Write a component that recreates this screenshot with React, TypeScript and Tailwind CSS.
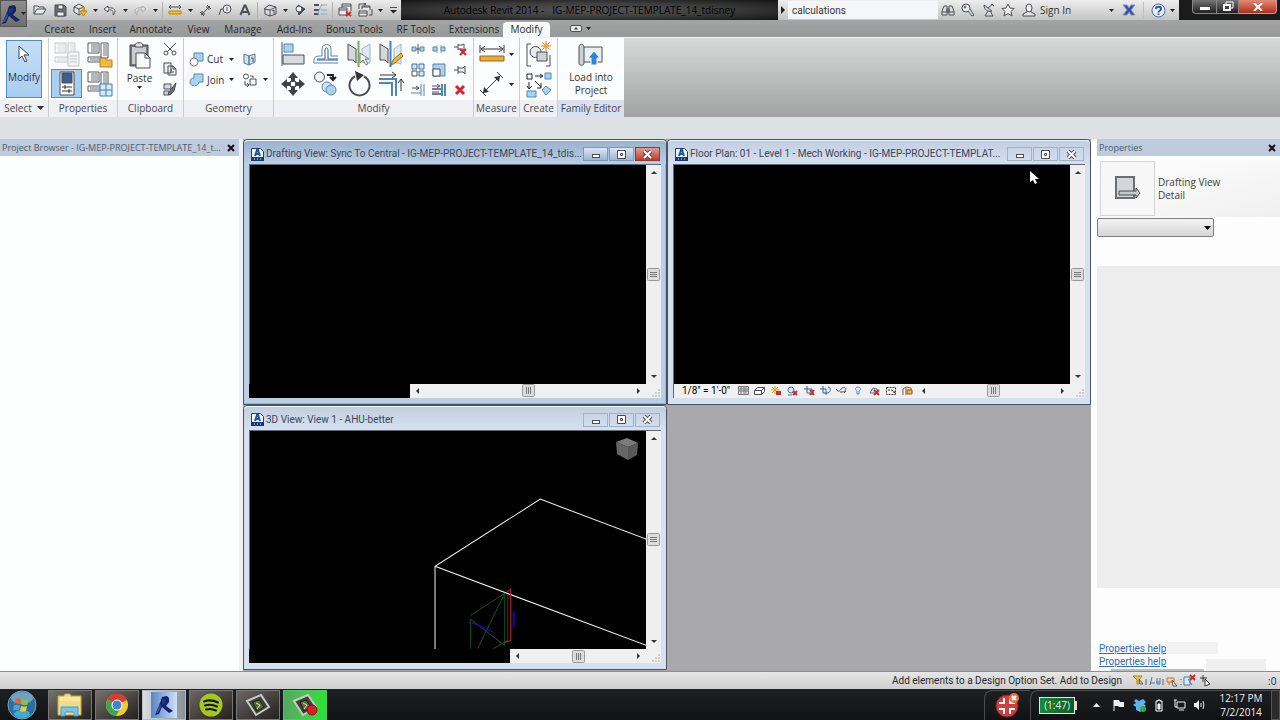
import type { ReactNode } from "react";
import clsx from "clsx";

interface IconProps {
  w: number;
  h: number;
  children: ReactNode;
  className?: string;
}

function Icon({ w, h, children, className }: IconProps) {
  return (
    <svg
      width={w}
      height={h}
      viewBox={`0 0 ${w} ${h}`}
      fill="none"
      stroke="#4b4f54"
      aria-hidden="true"
      className={clsx("shrink-0", className)}
    >
      {children}
    </svg>
  );
}

function Caret({ className }: { className?: string }) {
  return (
    <Icon w={5} h={3} className={className}>
      <path d="M0 0h5L2.500 3z" fill="#222" stroke="none" />
    </Icon>
  );
}

const BLUE = "#4f87bd";
const PALE = "#a9d2ee";
const RED = "#cf2a2a";

/* ---------- Quick access toolbar icons ---------- */

const icons = {
  open: (
    <Icon w={14} h={12}>
      <path d="M1 10V2h4l1 1h5v2M1 10l3-5h9l-3 5z" fill="#ececec" />
    </Icon>
  ),
  save: (
    <Icon w={13} h={13}>
      <path d="M1 1h9l2 2v9H1z" fill="#6d7075" />
      <path d="M4 1h5v4H4zM3 8h7v4H3z" fill="#f2f2f2" />
    </Icon>
  ),
  sync: (
    <Icon w={15} h={14}>
      <path d="M1 4l5-3 5 3v5l-5 3-5-3zM1 4l5 2 5-2M6 6v6" fill="#e8e8e8" />
      <path d="M8 8h5M10.500 4v5" stroke="#d99a18" strokeWidth={2} />
      <path d="M7 8h7l-3.500 5z" fill="#f0bb3c" stroke="#b98711" />
    </Icon>
  ),
  undo: (
    <Icon w={14} h={11}>
      <path d="M5 1L1 4l4 3V5c4-1 6 1 5 5 4-4 2-8-5-7z" fill="#f5f5f5" />
    </Icon>
  ),
  redo: (
    <Icon w={14} h={11}>
      <path d="M9 1l4 3-4 3V5C5 4 3 6 4 10 0 6 2 2 9 3z" fill="#e4e4e4" stroke="#a6a8aa" />
    </Icon>
  ),
  measure: (
    <Icon w={14} h={12}>
      <path d="M1 3h12M3 1L1 3l2 2M11 1l2 2-2 2" />
      <path d="M1 7h12v3H1z" fill="#f2c12e" stroke="#b98711" />
    </Icon>
  ),
  dimension: (
    <Icon w={13} h={13}>
      <path d="M2 11l9-9M1 8l4 4M8 1l4 4M3 7v3h3M7 3h3v3" />
    </Icon>
  ),
  tag: (
    <Icon w={14} h={12}>
      <circle cx={9} cy={5} r={4} fill="#eee" />
      <path d="M9 3v4M5 5H3L1 11" />
    </Icon>
  ),
  text: (
    <Icon w={12} h={12}>
      <path d="M1.500 11L5.500 1.500h1L10.500 11M3 8h6" strokeWidth={2} />
    </Icon>
  ),
  house: (
    <Icon w={14} h={13}>
      <path d="M1 5l5-4 7 2v7l-6 2-5-2V5M7 12V6l6-3M1 5l6 1" fill="#dadada" />
      <path d="M9 7l2-1v4" />
    </Icon>
  ),
  section: (
    <Icon w={12} h={12}>
      <path d="M4 1l7 4-5 5z" fill="#3f4347" />
      <circle cx={5} cy={5} r={3} fill="#f4f4f4" />
      <path d="M5 8v3" strokeWidth={2} />
    </Icon>
  ),
  thin: (
    <Icon w={15} h={12}>
      <path d="M1 1h5M1 6h5M1 10h5" strokeWidth={2} />
      <path d="M8 1h6M8 6h6M8 10h6M9 0L6 6l-1 6" stroke="#7fa6c9" />
    </Icon>
  ),
  closeHidden: (
    <Icon w={14} h={14}>
      <path d="M4 5V1h9v7M4 3h9M1 5h8v7H1zM1 7h8" fill="#ededed" />
      <path d="M8 9l5 4M13 9l-5 4" stroke="#d5252b" strokeWidth={2} />
    </Icon>
  ),
  switchWin: (
    <Icon w={15} h={14}>
      <path d="M4 6V3h8v4M4 4h8M1 8h8v5H1zM1 10h8" fill="#ededed" />
      <path d="M1 6V1h7M6 0l2 1-2 1M14 6v6h-3" />
    </Icon>
  ),
  binoculars: (
    <Icon w={14} h={13}>
      <path d="M3 2h3v9H1V7zM11 2H8v9h5V7zM6 5h2v3H6zM1 8h5M8 8h5" fill="#ddd" />
    </Icon>
  ),
  key: (
    <Icon w={14} h={14}>
      <circle cx={5} cy={5} r={4} fill="#eee" />
      <path d="M7 8l4 5 2-1-4-6" fill="#ddd" />
      <circle cx={4} cy={4} r={1} />
    </Icon>
  ),
  dish: (
    <Icon w={13} h={14}>
      <path d="M2 2c0 5 4 7 8 6zM6 5l5-4M6 8l-3 5h8l-3-5M9 1l3 2" fill="#ddd" />
    </Icon>
  ),
  star: (
    <Icon w={14} h={14}>
      <path d="M7 1l2 4 4 .5-3 3 1 4.500-4-2.500L3 13l1-4.500-3-3L5 5z" fill="#f1f1f1" />
    </Icon>
  ),
  user: (
    <Icon w={14} h={14}>
      <path d="M5 8v1L1 11v2h12v-2L9 9V8" fill="#e5e5e5" />
      <ellipse cx={7} cy={5} rx={3} ry={4} fill="#eee" />
    </Icon>
  ),
  exchange: (
    <Icon w={14} h={12}>
      <path d="M1 1h4l2 3 2-3h4L9 6l4 5H9L7 8l-2 3H1l4-5z" fill="#3553a5" stroke="#7d92cc" />
    </Icon>
  ),
  help: (
    <Icon w={15} h={15}>
      <circle cx={7.500} cy={7.500} r={6.500} fill="#e7effa" stroke="#4b6b9b" />
      <path d="M5 6c0-3 5-3 5 0 0 2-2.500 1.500-2.500 3.500M7.500 10.500v1.500" stroke="#2c57a5" strokeWidth={2} />
    </Icon>
  ),
};

type IconName = keyof typeof icons;

interface ToolItem {
  icon?: IconName;
  label?: string;
  caret?: boolean;
}

const quickTools: ToolItem[] = [
  { icon: "open", label: "Open" },
  { icon: "save", label: "Save" },
  { icon: "sync", label: "Synchronize" },
  { caret: true },
  { icon: "undo", label: "Undo" },
  { caret: true },
  { icon: "redo", label: "Redo" },
  { caret: true },
  {},
  { icon: "measure", label: "Measure" },
  { caret: true },
  { icon: "dimension", label: "Aligned Dimension" },
  { icon: "tag", label: "Tag by Category" },
  { icon: "text", label: "Text" },
  {},
  { icon: "house", label: "Default 3D View" },
  { caret: true },
  { icon: "section", label: "Section" },
  { icon: "thin", label: "Thin Lines" },
  {},
  { icon: "closeHidden", label: "Close Hidden Windows" },
  { icon: "switchWin", label: "Switch Windows" },
  { caret: true },
];

const tabs = [
  { name: "Create", cell: "w-[43px]" },
  { name: "Insert", cell: "w-[43px]" },
  { name: "Annotate", cell: "w-[54px]" },
  { name: "View", cell: "w-[41px]" },
  { name: "Manage", cell: "w-[48px]" },
  { name: "Add-Ins", cell: "w-[55px]" },
  { name: "Bonus Tools", cell: "w-[65px]" },
  { name: "RF Tools", cell: "w-[58px]" },
  { name: "Extensions", cell: "w-[58px]" },
  { name: "Modify", cell: "w-[47px]" },
];

function TitleBar() {
  return (
    <div className="flex h-5 bg-[#1b1b1b]">
      <div className="flex shrink-0 items-center bg-linear-to-b from-[#ededed] to-[#bfbfbf] pl-[3px]">
        {quickTools.map((tool, i) => {
          if (tool.icon) {
            return (
              <button key={i} aria-label={tool.label} className="flex w-5 justify-center">
                {icons[tool.icon]}
              </button>
            );
          }
          return tool.caret ? (
            <span key={i} className="flex w-[10px] justify-center">
              <Caret />
            </span>
          ) : (
            <span key={i} className="mx-[2px] h-4 w-px bg-[#b0b0b0]" />
          );
        })}
        <button aria-label="Customize toolbar" className="flex w-4 justify-center">
          <Icon w={7} h={7}>
            <path d="M0 .5h7" />
            <path d="M0 3h7L3.500 6.500z" fill="#222" stroke="none" />
          </Icon>
        </button>
      </div>
      <div className="flex min-w-0 flex-1 items-center justify-center gap-2 bg-radial from-[#555] via-[#3d3d3d] to-[#151515] whitespace-pre text-black">
        <span>Autodesk Revit 2014 -</span>
        <span>IG-MEP-PROJECT-TEMPLATE_14_tdisney</span>
      </div>
      <div className="flex w-[401px] shrink-0 items-center bg-linear-to-b from-[#eeeeee] to-[#c4c4c4]">
        <Icon w={10} h={8}>
          <path d="M3 0l4 4-4 4z" fill="#222" stroke="none" />
        </Icon>
        <input
          aria-label="Search help"
          defaultValue="calculations"
          className="h-[18px] w-[150px] bg-[#f5f6f9] px-1 font-['Roboto','Noto_Sans',sans-serif] text-[#333] outline-none"
        />
        <button aria-label="Search" className="flex w-5 justify-center">{icons.binoculars}</button>
        <button aria-label="Subscription Center" className="flex w-5 justify-center">{icons.key}</button>
        <button aria-label="Communication Center" className="flex w-5 justify-center">{icons.dish}</button>
        <button aria-label="Favorites" className="flex w-5 justify-center">{icons.star}</button>
        <button className="flex items-center gap-1 pl-[4px] text-[#333]">
          {icons.user}
          Sign In
        </button>
        <Caret className="ml-auto" />
        <button aria-label="Exchange Apps" className="ml-2 flex">{icons.exchange}</button>
        <span className="mx-[7px] h-4 w-px bg-[#c0c0c0]" />
        <button aria-label="Help" className="flex">{icons.help}</button>
        <Caret className="mx-1" />
      </div>
      <div className="flex w-[101px] shrink-0 pr-[3px] pl-[13px]">
        <button aria-label="Minimize" className="flex h-[14px] w-[25px] items-end justify-center rounded-bl border border-t-0 border-[#888] bg-linear-to-b from-[#777] to-[#222] pb-[3px]">
          <span className="h-[3px] w-[10px] bg-white" />
        </button>
        <button aria-label="Restore" className="flex h-[14px] w-[22px] items-center justify-center border border-t-0 border-l-0 border-[#888] bg-linear-to-b from-[#777] to-[#222]">
          <Icon w={12} h={11}>
            <path d="M4 3V1h7v6H9" stroke="#fff" />
            <path d="M2 4h6v5H2z" stroke="#fff" strokeWidth={2} />
          </Icon>
        </button>
        <button aria-label="Close" className="flex h-[14px] flex-1 items-center justify-center rounded-br border border-t-0 border-l-0 border-[#c99] bg-linear-to-b from-[#e08a78] to-[#b22a12]">
          <Icon w={10} h={8}>
            <path d="M1 0l8 8M9 0L1 8" stroke="#fff" strokeWidth={2} />
          </Icon>
        </button>
      </div>
    </div>
  );
}

function RevitLogo({ size = 20 }: { size?: number }) {
  return (
    <svg width={size} height={size} viewBox="0 0 20 20" aria-hidden="true" className="shrink-0">
      <path d="M8 2l5-1 2 2v4l-3 4 7 5-4 2-7-6-3 7-4 1 5-12z" fill="#14246a" />
      <path d="M8 5l4-1-1 4-3 2z" fill="#1f3782" />
      <path d="M2 18L6 9l1 3-3 6z" fill="#31509f" />
    </svg>
  );
}

function Header() {
  return (
    <header className="flex bg-[#9c9d9d]">
      <button
        aria-label="Application menu"
        className="flex h-[27px] w-[27px] shrink-0 items-center border border-[#555] bg-linear-to-b from-[#8f8f8f] to-[#6d6d6d]"
      >
        <RevitLogo />
        <Caret />
      </button>
      <div className="min-w-0 flex-1">
        <TitleBar />
        <nav className="flex h-[17px] items-center bg-linear-to-b from-[#a3a4a4] to-[#989999] pl-[11px]">
          {tabs.map((tab) => (
            <button
              key={tab.name}
              className={clsx(
                "shrink-0 text-center whitespace-nowrap text-[#26282a]",
                tab.cell,
                tab.name === "Modify" ? "h-[15px] self-end rounded-t-sm bg-[#f8f9fb] pb-px" : "h-full pt-px",
              )}
            >
              {tab.name}
            </button>
          ))}
          <button aria-label="Minimize ribbon" className="ml-5 flex items-center gap-1">
            <Icon w={12} h={7}>
              <rect x={0.500} y={0.500} width={11} height={6} rx={1.500} fill="#eee" />
              <path d="M4 4.500h4L6 2z" fill="#333" stroke="none" />
            </Icon>
            <Caret />
          </button>
        </nav>
      </div>
    </header>
  );
}

/* ---------- Ribbon ---------- */

interface PanelProps {
  title: string;
  className: string;
  caret?: boolean;
  children: ReactNode;
}

function Panel({ title, className, caret, children }: PanelProps) {
  return (
    <section
      className={clsx("flex shrink-0 flex-col border-r border-[#c9ccd0] bg-[#fcfdfe]", className)}
    >
      <div className="flex flex-1 items-center justify-center">{children}</div>
      <h2 className="flex h-[17px] items-center justify-center gap-[5px] bg-[#eff0f3] pb-px whitespace-nowrap text-[#46494d]">
        {title}
        {caret && (
          <Icon w={7} h={4}>
            <path d="M0 0h7L3.500 4z" fill="#333" stroke="none" />
          </Icon>
        )}
      </h2>
    </section>
  );
}

function Tool({ label, children, className }: { label: string; children: ReactNode; className?: string }) {
  return (
    <button aria-label={label} className={clsx("flex items-center justify-center", className)}>
      {children}
    </button>
  );
}

function PropertyGrid({ faded, children }: { faded?: boolean; children?: ReactNode }) {
  const line = faded ? "#c6c9cc" : "#55595e";
  return (
    <Icon w={26} h={26}>
      <path d="M1 1h11v10H1zM14 1h7v15h-7zM1 15h13v5H1z" stroke={line} fill={faded ? "#f6f6f6" : "#fff"} />
      <path d="M4 2h7v8H4zM16 2h4v12h-4zM3 16h10v3H3z" fill={faded ? "#e9eaeb" : "#b4b8bd"} stroke="none" />
      {children}
    </Icon>
  );
}

function ModifyPanel() {
  return (
    <div className="flex items-center gap-px">
      <div className="grid grid-cols-[33px_33px_33px_32px] grid-rows-[30px_30px] place-items-center">
        <Tool label="Align">
          <Icon w={26} h={26}>
            <path d="M2 1v24" />
            <path d="M4 3h9v8H4z" fill={PALE} stroke={BLUE} />
            <path d="M3 14h21v9H3z" fill="#d8dbdf" />
          </Icon>
        </Tool>
        <Tool label="Offset">
          <Icon w={26} h={22}>
            <path d="M1 20h24M1 20c-1-7 3-7 8-7V6c0-6 9-6 9 0v7h7" stroke={BLUE} />
            <path d="M4 17h21M4 16h8V7c0-3 3-3 3 0v9h10" stroke="#3c5f86" />
          </Icon>
        </Tool>
        <Tool label="Mirror - Pick Axis">
          <Icon w={26} h={26}>
            <path d="M2 3l8 5v14l-3-3H2z" fill="#d5d8db" />
            <path d="M12.500 0v26" stroke="#6fae50" strokeWidth={2} />
            <path d="M24 3l-8 5v13l8 1z" fill="#d9ecf5" stroke="#9fb7c4" />
            <path d="M14 12v10l3-3 3 5 2-1-3-5h4z" fill="#fff" stroke="#777" />
          </Icon>
        </Tool>
        <Tool label="Mirror - Draw Axis">
          <Icon w={26} h={26}>
            <path d="M2 3l8 5v14l-3-3H2z" fill="#d5d8db" />
            <path d="M12.500 0v26" stroke="#3c82cf" strokeWidth={2} />
            <path d="M23 3l-7 5v13l7 2z" fill="#d9ecf5" stroke="#9fb7c4" />
            <path d="M13 24l2-5 8-7 2 3-8 7z" fill="#f1b73c" stroke="#9a6b14" />
          </Icon>
        </Tool>
        <Tool label="Move">
          <Icon w={26} h={26}>
            <path
              d="M13 1l5 6h-3v4h4V8l6 5-6 5v-3h-4v4h3l-5 6-5-6h3v-4H7v3l-6-5 6-5v3h4V7H8z"
              fill="#3f4347"
              stroke="none"
            />
            <rect x={10.500} y={10.500} width={5} height={5} fill="#fff" />
          </Icon>
        </Tool>
        <Tool label="Copy">
          <Icon w={26} h={26}>
            <circle cx={6.500} cy={6} r={5} fill="#f1f1f1" />
            <path d="M14 4h6v5M17 6l3 3 3-3" stroke="#222" strokeWidth={2} />
            <circle cx={14} cy={16} r={5} fill="#cfe4f4" stroke={BLUE} />
            <circle cx={18} cy={19} r={5} fill={PALE} stroke={BLUE} />
          </Icon>
        </Tool>
        <Tool label="Rotate">
          <Icon w={26} h={26}>
            <path d="M18 5.500a10 10 0 1 1-9 0" strokeWidth={2} />
            <path d="M9 0l9 4-7 6z" fill="#333" stroke="none" />
          </Icon>
        </Tool>
        <Tool label="Trim / Extend to Corner">
          <Icon w={26} h={26}>
            <path d="M1 8h17v17M1 12h13v13" stroke={BLUE} strokeWidth={2} />
            <path d="M2 4h15M14 1l4 3-4 3M23 20V9M20 12l3-4 3 4" stroke="#333" />
          </Icon>
        </Tool>
      </div>
      <div className="grid grid-cols-[20px_21px_22px] grid-rows-[21px_20px_20px] place-items-center">
        <Tool label="Split Element">
          <Icon w={14} h={10}>
            <path d="M1 3h4v4H1zM9 3h4v4H9z" fill={PALE} stroke={BLUE} />
            <path d="M5 5h4M7 0v10" stroke="#555" />
          </Icon>
        </Tool>
        <Tool label="Split with Gap">
          <Icon w={14} h={10}>
            <path d="M1 3h4v4H1zM9 3h4v4H9z" fill={PALE} stroke={BLUE} />
            <path d="M5 1v8M9 1v8" stroke="#8ab" strokeDasharray="2 1" />
          </Icon>
        </Tool>
        <Tool label="Unpin">
          <Icon w={15} h={14}>
            <path d="M1 5h4M5 2v6M5 3h4l2-1v6L9 7H5" />
            <path d="M7 7l6 6M13 7l-6 6" stroke="#d5252b" strokeWidth={2} />
          </Icon>
        </Tool>
        <Tool label="Array">
          <Icon w={14} h={14}>
            <path d="M1 1h5v5H1zM8 1h5v5H8zM8 8h5v5H8z" fill="#cfe6f6" stroke="#3f6f9f" />
            <path d="M1 8h5v5H1z" fill="#fff" />
          </Icon>
        </Tool>
        <Tool label="Scale">
          <Icon w={14} h={14}>
            <path d="M1 1h12v12H1z" fill={PALE} stroke={BLUE} />
            <path d="M1 6h7v7H1z" fill="#fff" />
          </Icon>
        </Tool>
        <Tool label="Pin">
          <Icon w={13} h={10}>
            <path d="M0 5h4M4 1v8M4 3h5l2-2v8L9 7H4" fill="#eee" />
          </Icon>
        </Tool>
        <Tool label="Trim / Extend Single">
          <Icon w={14} h={12}>
            <path d="M1 4h7M5 2l3 2-3 2" />
            <path d="M0 9h10M10 0v12M13 0v12" stroke={BLUE} />
          </Icon>
        </Tool>
        <Tool label="Trim / Extend Multiple">
          <Icon w={14} h={12}>
            <path d="M0 5h9M0 10h9M10 0v12M13 0v12" stroke={BLUE} strokeWidth={2} />
            <path d="M0 2h7M5 0l3 2-3 2M0 8h7" stroke="#a03040" />
          </Icon>
        </Tool>
        <Tool label="Delete">
          <Icon w={12} h={12}>
            <path d="M2 2l8 8M10 2l-8 8" stroke="#d5252b" strokeWidth={3} />
          </Icon>
        </Tool>
      </div>
    </div>
  );
}

function Ribbon() {
  return (
    <div className="flex h-20 border-t border-[#f4f4f4] bg-linear-to-b from-[#d8dad9] to-[#a2a3a3]">
      <Panel title="Select" className="w-[49px]" caret>
        <button className="flex h-[58px] w-[36px] flex-col items-center gap-[7px] border border-[#4d8fc6] bg-linear-to-b from-[#c6def6] to-[#a9cef0] pt-1">
          <Icon w={12} h={18}>
            <path d="M1 1v13l3-3 3 6 2-1-3-6h5z" fill="#fff" stroke="#444" />
          </Icon>
          Modify
        </button>
      </Panel>
      <Panel title="Properties" className="w-[69px]">
        <div className="grid grid-cols-2 grid-rows-[29px_29px] place-items-center gap-x-[2px]">
          <Tool label="Family Category">
            <PropertyGrid faded>
              <path d="M14 10h11v14H14zM16 14h7M16 17h7M16 20h7" fill="#f4f4f4" stroke="#c0c3c6" />
            </PropertyGrid>
          </Tool>
          <Tool label="Family Types">
            <PropertyGrid>
              <path d="M13 16h5l1 2h6v7H13z" fill="#f3b943" stroke="#b5811b" />
            </PropertyGrid>
          </Tool>
          <Tool label="Properties" className="h-[29px] w-[31px] border border-[#4d8fc6] bg-[#a9cef0]">
            <Icon w={18} h={25}>
              <path d="M2 1h14v23H2z" fill="#fdfdfd" />
              <path d="M4 2h10v10H4z" fill="#3c5f8e" />
              <path d="M4 16h10M4 20h10M7 14v4M11 18v4" stroke="#333" />
            </Icon>
          </Tool>
          <Tool label="Type Properties">
            <PropertyGrid>
              <path d="M13 13h12v12H13zM19 13v12M13 19h12" fill="#d5ebfa" stroke="#3c7fc0" />
            </PropertyGrid>
          </Tool>
        </div>
      </Panel>
      <Panel title="Clipboard" className="w-[66px]">
        <div className="flex items-center gap-2">
          <button className="flex w-[30px] flex-col items-center gap-px pb-[8px]">
            <Icon w={24} h={28}>
              <path d="M2 3h18v21H2z" fill="#75797e" />
              <path d="M4 5h14v17H4z" fill="#c9ccd0" stroke="none" />
              <path d="M7 5V3c0-3 8-3 8 0v2z" fill="#e4e4e4" />
              <path d="M8 11h9l5 5v10H8z" fill="#f7f8f9" />
              <path d="M17 11v5h5" />
            </Icon>
            Paste
            <Caret />
          </button>
          <div className="flex flex-col items-center gap-[6px]">
            <Tool label="Cut to Clipboard">
              <Icon w={14} h={14}>
                <path d="M1 1l9 9M13 1L4 10" />
                <circle cx={3} cy={11} r={2} />
                <circle cx={11} cy={11} r={2} />
              </Icon>
            </Tool>
            <Tool label="Copy to Clipboard">
              <Icon w={14} h={14}>
                <path d="M1 1h7v10H1zM5 4h5l3 3v6H5z" fill="#eceef0" />
                <path d="M10 4v3h3M7 8h2M7 10h4" />
              </Icon>
            </Tool>
            <Tool label="Match Type Properties">
              <Icon w={14} h={14}>
                <path d="M1 2h7v5H1zM1 9h5v4H1z" fill="#d7d9dc" />
                <path d="M13 1l-5 6-3 5 2 1 4-4z" fill="#6c7177" />
              </Icon>
            </Tool>
          </div>
        </div>
      </Panel>
      <Panel title="Geometry" className="w-[90px]">
        <div className="grid grid-cols-[45px_26px] grid-rows-[21px_20px] items-center gap-x-2">
          <button className="flex items-center gap-[3px]">
            <Icon w={15} h={15}>
              <path d="M5 1h9v8H5z" fill={PALE} stroke={BLUE} />
              <circle cx={5} cy={10} r={4} fill="#fff" stroke="#b0686c" />
            </Icon>
            <span className="flex-1 text-left">Cut</span>
            <Caret />
          </button>
          <Tool label="Cope" className="w-4">
            <Icon w={14} h={14}>
              <path d="M1 2l5 2v9l-5-2zM6 4l6-2v8l-6 3z" fill="#cfe3f2" stroke="#55789c" />
              <path d="M8 6h2v4" />
            </Icon>
          </Tool>
          <button className="flex items-center gap-[3px]">
            <Icon w={15} h={14}>
              <path d="M5 1h9v8h-4c0 5-9 5-9 0 0-3 2-4 4-4z" fill={PALE} stroke={BLUE} />
            </Icon>
            <span className="flex-1 text-left">Join</span>
            <Caret />
          </button>
          <div className="flex items-center gap-[6px]">
            <Tool label="Split Face">
              <Icon w={15} h={14}>
                <circle cx={4} cy={3.500} r={2.500} />
                <path d="M8 6h6v6H8zM3 8v4h4M8 3h3v2M5 10l2 2-2 2" fill="none" />
              </Icon>
            </Tool>
            <Caret />
          </div>
        </div>
      </Panel>
      <Panel title="Modify" className="w-[200px]">
        <ModifyPanel />
      </Panel>
      <Panel title="Measure" className="w-[46px]">
        <div className="grid grid-cols-[26px_6px] grid-rows-[30px_30px] items-center gap-x-1">
          <Tool label="Measure Between">
            <Icon w={26} h={18}>
              <path d="M2 4h22M6 1L2 4l4 3M20 1l4 3-4 3M1 0v8M25 0v8" stroke="#333" />
              <path d="M1 11h24v5H1z" fill="#e9ad34" stroke="#8f681d" />
            </Icon>
          </Tool>
          <Caret />
          <Tool label="Aligned Dimension">
            <Icon w={26} h={26}>
              <path d="M4 22L21 5M1 19l6 6M18 1l6 6" stroke="#333" />
              <path d="M4 22l1-6 5 5zM21 5l-1 6-5-5z" fill="#333" stroke="none" />
            </Icon>
          </Tool>
          <Caret />
        </div>
      </Panel>
      <Panel title="Create" className="w-[38px]">
        <div className="flex flex-col gap-1">
          <Tool label="Create Group">
            <Icon w={26} h={27}>
              <path d="M5 3H1v22h4M20 25h4V14" />
              <circle cx={9.500} cy={11} r={5.500} fill="#e9eaec" />
              <path d="M11 11h10v9H11z" fill="#cdd0d4" />
              <path d="M20 0v10M15 5h10M16.500 1.500l7 7M23.500 1.500l-7 7" stroke="#e7772a" />
              <circle cx={20} cy={5} r={2.500} fill="#f7a33c" stroke="none" />
            </Icon>
          </Tool>
          <Tool label="Create Similar">
            <Icon w={26} h={26}>
              <path d="M1 2h5v5H1zM9 4h7M14 2l3 2-3 2M3 10v6M1 14l2 3 3-3M9 9l6 6M15 11v5h-4" stroke="#222" />
              <path d="M19 1h6v6h-6zM1 19h9v6H1zM20 14l5 4-5 5-4-5z" fill={PALE} stroke={BLUE} />
            </Icon>
          </Tool>
        </div>
      </Panel>
      <section className="flex w-[66px] shrink-0 flex-col bg-[#fcfdfe]">
        <button className="flex flex-1 flex-col items-center justify-center pt-px leading-[13px]">
          <Icon w={26} h={25} className="mb-[3px]">
            <path d="M5 4h19v15H5z" fill="#eceff1" />
            <path d="M1 20V5c0-5 5-5 5 0v15c0 3-5 3-5 0z" fill="#cfd2d5" />
            <path d="M16 8l6 7h-3v7h-6v-7h-3z" fill="#2c85d8" stroke="#fff" />
          </Icon>
          Load into
          <br />
          Project
        </button>
        <h2 className="flex h-[17px] items-center justify-center bg-[#d7dff0] pb-px whitespace-nowrap text-[#46494d]">
          Family Editor
        </h2>
      </section>
    </div>
  );
}

/* ---------- Document windows ---------- */

function WindowIcon() {
  return (
    <Icon w={13} h={13}>
      <path d="M.5.5h9l3 3v9H.500z" fill="#f2f6fb" stroke="#1c427c" />
      <path d="M0 9h13v4H0z" fill="#123a77" stroke="none" />
      <path d="M4 8l2-6h1l2 6M5 6h4" stroke="#1c55a5" strokeWidth={2} />
      <path d="M3 11h1M6 11h1M9 11h1" stroke="#fff" />
    </Icon>
  );
}

function Thumb({ vertical }: { vertical?: boolean }) {
  return (
    <Icon w={13} h={13}>
      <rect x={0.500} y={0.500} width={12} height={12} rx={1} fill="#dcdcdc" stroke="#9a9a9a" />
      <path d={vertical ? "M3 4.500h7M3 6.500h7M3 8.500h7" : "M4.500 3v7M6.500 3v7M8.500 3v7"} stroke="#777" />
    </Icon>
  );
}

function Arrow({ d }: { d: string }) {
  return (
    <Icon w={6} h={6}>
      <path d={d} fill="#333" stroke="none" />
    </Icon>
  );
}

interface DocWindowProps {
  title: string;
  active?: boolean;
  footer: ReactNode;
  children?: ReactNode;
}

function DocWindow({ title, active, footer, children }: DocWindowProps) {
  const control = clsx(
    "flex h-[14px] w-[25px] items-center justify-center border",
    active ? "border-[#7f97b8] bg-linear-to-b from-[#dbe7f4] to-[#9db5d2]" : "border-[#a3b0c9]",
  );
  return (
    <section
      className={clsx(
        "flex min-h-0 min-w-0 flex-col rounded-t border border-[#4a5460] px-[5px] pb-[6px]",
        active
          ? "bg-[#b9cee7] shadow-[inset_0_-1px_0_#5fd3df,inset_-1px_0_0_#5fd3df]"
          : "bg-[#d5e0f0]",
      )}
    >
      <header
        className={clsx(
          "-mx-[5px] flex h-6 shrink-0 items-center gap-[2px] rounded-t border-t border-[#eef3f9] pt-[3px] pr-[6px] pl-[7px] text-[#3c4757]",
          active ? "bg-linear-to-b from-[#9bb2ce] to-[#b9cee7]" : "bg-linear-to-b from-[#c3cfe0] to-[#d5e0f0]",
        )}
      >
        <WindowIcon />
        <h3 className="min-w-0 flex-1 font-['Roboto','Noto_Sans',sans-serif] whitespace-nowrap">{title}</h3>
        <div className="flex gap-px">
          <button aria-label="Minimize window" className={control}>
            <Icon w={10} h={10}>
              <rect x={1.500} y={5.500} width={7} height={3} fill="#fff" />
            </Icon>
          </button>
          <button aria-label="Maximize window" className={control}>
            <Icon w={9} h={9}>
              <path d="M.5.5h8v8h-8z" fill="#fff" />
              <path d="M3.500 3.500h2v2h-2z" />
            </Icon>
          </button>
          <button
            aria-label="Close window"
            className={clsx(control, active && "border-[#8d3a34] from-[#e39a8c] to-[#c1392b]")}
          >
            <Icon w={11} h={9}>
              <path d="M2 1l7 7M9 1L2 8" strokeWidth={4} />
              <path d="M2 1l7 7M9 1L2 8" stroke="#fff" strokeWidth={2} />
            </Icon>
          </button>
        </div>
      </header>
      <div className="flex min-h-0 flex-1 border-t border-l border-[#5d6979]">
        <div className="relative min-w-0 flex-1 overflow-hidden bg-black">{children}</div>
        <div className="flex w-[15px] shrink-0 flex-col items-center justify-between bg-[#efefef] py-1">
          <Arrow d="M0 5h6L3 2z" />
          <Thumb vertical />
          <Arrow d="M0 1h6L3 4z" />
        </div>
      </div>
      <div className="flex h-[14px] shrink-0 bg-[#f0f0f0]">
        {footer}
        <div className="flex min-w-0 flex-1 items-center justify-between px-1">
          <Arrow d="M5 0v6L2 3z" />
          <Thumb />
          <Arrow d="M1 0v6l3-3z" />
        </div>
        <div className="flex w-[15px] items-end justify-end">
          <Icon w={9} h={9}>
            <path d="M7 0v2M4 3v2M7 3v2M1 6v2M4 6v2M7 6v2" stroke="#aaa" />
          </Icon>
        </div>
      </div>
    </section>
  );
}

const viewControls: { label: string; art: ReactNode }[] = [
  { label: "Detail Level", art: <path d="M.5.500h10v8H.500zM1 3h9M1 5h9M3 1v7M6 1v7M8 1v7" stroke="#777" /> },
  { label: "Visual Style", art: <path d="M.500 4.500l3-3h7v4l-3 3h-7zM.500 4.500h7v4M7.500 4.500l3-3" fill="#fff" /> },
  {
    label: "Sun Path",
    art: (
      <>
        <path d="M4 0v8M0 4h8M1 1l6 6M7 1L1 7" stroke="#e9a020" />
        <path d="M5 5h5v4H5z" fill={RED} stroke="none" />
      </>
    ),
  },
  {
    label: "Shadows",
    art: (
      <>
        <circle cx={4} cy={4} r={3} stroke="#4872b0" fill="#dde8f8" />
        <path d="M1 9h4" stroke="#4872b0" />
        <path d="M6 5l4 4M10 5L6 9" stroke={RED} strokeWidth={2} />
      </>
    ),
  },
  {
    label: "Crop View",
    art: (
      <>
        <path d="M3 0v7h7M0 3h8v6" stroke="#35639f" />
        <path d="M6 4l4 5M10 4L6 9" stroke={RED} strokeWidth={2} />
      </>
    ),
  },
  { label: "Crop Region", art: <path d="M3 0v7h5M0 3h6v6M8 1c3 0 3 5 0 6" stroke="#35639f" /> },
  { label: "Hide / Isolate", art: <path d="M0 3c3 5 5 0 6-1 5-2 5 3 1 4H4M8 7l2-2" /> },
  { label: "Reveal Hidden", art: <path d="M5 1c3 0 3 3 1 4v3H4V5C2 4 2 1 5 1z" fill="#e8f3ff" stroke="#4f8bd0" /> },
  {
    label: "Worksharing Display",
    art: (
      <>
        <path d="M1 7l3-5 4 1 1 4z" fill="#dbe6f2" stroke="#566f8f" />
        <path d="M5 4l5 5M10 4L5 9" stroke={RED} strokeWidth={2} />
      </>
    ),
  },
  { label: "View Properties", art: <path d="M.500 1.500h9v7h-9zM2 4h4M6 4l4 4M8 5v3" stroke="#333" strokeDasharray="2 1" /> },
  {
    label: "Analytical Model",
    art: (
      <>
        <path d="M1 9V3l3-2 5 1v6M4 2v7M7 3v5" stroke="#8a5a2a" />
        <path d="M5 4h5v4H5z" fill="#f0bb3c" stroke="#8a5a2a" />
      </>
    ),
  },
];

function ViewControlBar() {
  return (
    <div className="flex w-[243px] shrink-0 items-center border-l border-[#5d6979] pl-2 text-black">
      <span className="w-[53px] font-['Roboto','Noto_Sans',sans-serif] whitespace-nowrap">1/8" = 1'-0"</span>
      {viewControls.map((control) => (
        <button key={control.label} aria-label={control.label} className="flex flex-1 justify-center">
          <Icon w={11} h={10}>{control.art}</Icon>
        </button>
      ))}
    </div>
  );
}

function ModelView() {
  return (
    <>
      <svg
        viewBox="0 0 396 218"
        preserveAspectRatio="xMaxYMax slice"
        fill="none"
        aria-hidden="true"
        className="block h-full w-full"
      >
        <path d="M185.500 218v-83l105-67 106 40M185.500 135l211 79" stroke="#f4f4f4" />
        <path d="M221 184l34-22v52l-34-26v29M255 162l-27 55M244 217l14-8v-46" stroke="#124f1c" />
        <path d="M219 191l8 2 17 8" stroke="#1414b4" />
        <path d="M264 180v16" stroke="#0c0cae" strokeWidth={2} />
        <path d="M257 161l4-3v51l-6 2" stroke="#d21638" />
      </svg>
      {/* View cube */}
      <svg width={22} height={24} viewBox="0 0 22 24" aria-hidden="true" className="absolute top-[6px] right-[8px]">
        <path d="M0 5l11-4 11 5-10 4z" fill="#7b7b7b" />
        <path d="M0 5l12 5v13L1 17z" fill="#666" />
        <path d="M12 10l10-4-1 12-9 5z" fill="#585858" />
      </svg>
    </>
  );
}

function PanelTitle({ title }: { title: string }) {
  return (
    <header className="flex h-[17px] shrink-0 items-center justify-between bg-[#bdcbdd] pr-1 pl-[2px] text-[#4d5c6e]">
      <h2 className="text-[9px] whitespace-nowrap">{title}</h2>
      <button aria-label={`Close ${title}`} className="flex">
        <Icon w={8} h={8}>
          <path d="M1 1l6 6M7 1L1 7" stroke="#111" strokeWidth={2} />
        </Icon>
      </button>
    </header>
  );
}

function PropertiesPanel() {
  return (
    <aside className="flex w-[189px] shrink-0 flex-col bg-[#fdfdfd] pl-[6px]">
      <PanelTitle title="Properties" />
      <div className="mt-1 flex h-[57px] shrink-0 items-center gap-[3px] bg-linear-to-br from-white to-[#f0f0f1] pl-[3px] text-[#3d4043]">
        <div className="flex h-[55px] w-[55px] items-center justify-center border border-[#d4d5d8] bg-[#f7f7f8]">
          <Icon w={26} h={25}>
            <path d="M1 1h18v21H1z" fill="#d4d7da" stroke="#6a6e73" strokeWidth={2} />
            <path d="M4 15h17v-3l4 5-4 5v-3H4z" fill="#c5c8cc" />
          </Icon>
        </div>
        <p className="leading-[13px]">
          Drafting View
          <br />
          Detail
        </p>
      </div>
      <div className="relative mt-px h-[19px] w-[117px] shrink-0">
        <select
          aria-label="Type selector"
          className="h-full w-full appearance-none rounded-xs border border-[#7d7d7d] bg-linear-to-b from-[#f3f3f3] to-[#d6d6d6]"
        />
        <Icon w={7} h={4} className="pointer-events-none absolute top-2 right-[3px]">
          <path d="M0 0h7L3.500 4z" fill="#000" stroke="none" />
        </Icon>
      </div>
      <div className="mt-[29px] flex-1 bg-[#ededee]" />
      <div className="flex h-[83px] shrink-0 flex-col justify-end pl-[2px] leading-[13px]">
        <div className="flex h-[13px]">
          <a href="#help" className="font-['Roboto','Noto_Sans',sans-serif] text-[#2f6cc4] underline">Properties help</a>
          <span className="h-3 w-[52px] bg-[#f2f2f2]" />
        </div>
        <div className="flex h-[13px]">
          <a href="#properties-help" className="font-['Roboto','Noto_Sans',sans-serif] text-[#2f6cc4] underline">Properties help</a>
          <span className="mt-1 ml-10 h-3 w-[60px] bg-[#f0f0f0]" />
        </div>
        <div className="mt-px ml-3 h-[2px] w-[93px] bg-[#bdbdbd]" />
      </div>
    </aside>
  );
}

function Workspace() {
  return (
    <main className="flex min-h-0 flex-1 bg-[#eff1f3]">
      <aside className="mr-1 flex w-[239px] shrink-0 flex-col bg-[#fdfefe]">
        <PanelTitle title="Project Browser - IG-MEP-PROJECT-TEMPLATE_14_t..." />
      </aside>
      <div className="grid min-w-0 flex-1 grid-cols-2 grid-rows-2 bg-[#a9a9ab] pb-px">
        <DocWindow
          title="Drafting View: Sync To Central - IG-MEP-PROJECT-TEMPLATE_14_tdis..."
          active
          footer={<div className="w-[161px] shrink-0 bg-black" />}
        />
        <DocWindow
          title="Floor Plan: 01 - Level 1 - Mech Working - IG-MEP-PROJECT-TEMPLAT..."
          footer={<ViewControlBar />}
        >
          <Icon w={10} h={14} className="absolute top-[6px] right-[31px]">
            <path d="M1 0v11l3-2 2 4 2-1-2-4h4z" fill="#fff" stroke="none" />
          </Icon>
        </DocWindow>
        <DocWindow
          title="3D View: View 1 - AHU-better"
          footer={<div className="w-[261px] shrink-0 bg-black" />}
        >
          <ModelView />
        </DocWindow>
      </div>
      <PropertiesPanel />
    </main>
  );
}

function StatusBar() {
  return (
    <footer className="flex h-[18px] shrink-0 items-center border-t border-[#8b8d8e] bg-linear-to-b from-[#e6e6e6] to-[#cfcfcf] text-[#26282a]">
      <p className="ml-auto w-[232px] font-['Roboto','Noto_Sans',sans-serif] whitespace-nowrap">
        Add elements to a Design Option Set. Add to Design
      </p>
      <Icon w={90} h={14} className="ml-2">
        <path d="M1 2h9L7 6v4H5V6z" fill="#f3c23c" stroke="#a8832b" />
        <path d="M7 5l4 5H8zM14 5v6" stroke="#666" />
        <path d="M18 9h5M20 3l-2 8M25 4v6h3V4M24 8h4" stroke="#4c78b5" />
        <path d="M31 5v6" stroke="#666" />
        <path d="M35 4h7v4h-7zM37 8v3" stroke="#d46a2a" fill="#f6d3b8" />
        <path d="M40 6l5 6h-4z" fill="#fff" stroke="#555" />
        <path d="M49 5v1M49 10v1" stroke="#666" />
        <path d="M52 3h6v8h-6zM56 5l4 6" stroke="#4c78b5" fill="#dcebf8" />
        <path d="M58 1l5 5M63 1l-5 5" stroke={RED} strokeWidth={2} />
        <path d="M71 1v7M68 4h7" stroke="#333" />
        <path d="M73 5v7l5-2z" fill="#fff" stroke="#333" />
      </Icon>
      <span className="ml-[46px] w-[12px]">:0</span>
    </footer>
  );
}

/* ---------- Windows taskbar ---------- */

function CamtasiaArt({ recording }: { recording?: boolean }) {
  return (
    <Icon w={28} h={26}>
      <path d="M3 9l14-6 8 12-13 8z" fill="#3b4430" stroke="#c9c9c9" strokeWidth={2} />
      <path d="M9 10l6-2 5 7-7 4z" fill="#5d6b3c" stroke="#222" />
      <path d="M12 11l4 2-3 4" stroke="#d9e0b5" />
      {recording && <circle cx={21} cy={18} r={5} fill="#e01b2c" stroke="#8d0e19" />}
    </Icon>
  );
}

const taskButtons: { label: string; className: string; art: ReactNode }[] = [
  {
    label: "Windows Explorer",
    className: "border-[#777] bg-linear-to-br from-[#77726c] to-[#24211f]",
    art: (
      <Icon w={28} h={26}>
        <path d="M2 4h6l1-2h5l1 2h10v19H2z" fill="#f1dc86" stroke="#c9a94a" />
        <path d="M4 6h20M4 8h20" stroke="#fff3b8" />
        <path d="M5 24v-9h17v9h-4v-4H9v4z" fill="#7cc3ea" stroke="#4a98cc" />
      </Icon>
    ),
  },
  {
    label: "Google Chrome",
    className: "border-[#777] bg-linear-to-br from-[#77726c] to-[#24211f]",
    art: (
      <svg width={24} height={24} viewBox="0 0 24 24" aria-hidden="true">
        <circle cx={12} cy={12} r={11} fill="#f4cb2c" />
        <path d="M12 12L2.500 6.500A11 11 0 0 1 22 7z" fill="#dc3a2c" />
        <path d="M12 12L2.500 6.500A11 11 0 0 0 11 23l5-9z" fill="#3da64b" />
        <circle cx={12} cy={12} r={5.500} fill="#fff" />
        <circle cx={12} cy={12} r={4.500} fill="#3f82d8" />
      </svg>
    ),
  },
  {
    label: "Autodesk Revit",
    className: "border-[#b8bdc4] bg-linear-to-r from-[#d9dce0] to-[#8c9199]",
    art: (
      <span className="flex h-[26px] w-[26px] items-center justify-center bg-linear-to-r from-[#5b84c4] to-[#cfe0f6]">
        <RevitLogo />
      </span>
    ),
  },
  {
    label: "Spotify",
    className: "border-[#777] bg-linear-to-br from-[#6b6764] to-[#24211f]",
    art: (
      <Icon w={24} h={24}>
        <circle cx={12} cy={12} r={11.500} fill="#a5c71f" stroke="none" />
        <path d="M5 8.500c5-2 10-1 14 1M6 12.500c4-1.500 8-1 12 1M7 16.500c3-1 7-.5 10 1" stroke="#151a08" strokeWidth={2} strokeLinecap="round" />
      </Icon>
    ),
  },
  {
    label: "Camtasia Studio",
    className: "border-[#777] bg-linear-to-br from-[#6b6764] to-[#24211f]",
    art: <CamtasiaArt />,
  },
  {
    label: "Camtasia Recorder",
    className: "border-[#58c461] bg-linear-to-r from-[#55a760] to-[#22e52e]",
    art: <CamtasiaArt recording />,
  },
];

function Taskbar() {
  return (
    <footer className="flex h-[31px] shrink-0 items-center bg-linear-to-b from-[#1e2022] to-[#111213] text-[#eee]">
      <button aria-label="Start" className="flex w-[44px] justify-center">
        <svg width={30} height={30} viewBox="0 0 30 30" aria-hidden="true">
          <circle cx={15} cy={15} r={14} fill="#2b6f9d" stroke="#7f9fb5" />
          <ellipse cx={15} cy={8} rx={11} ry={6} fill="#8db9d2" opacity={0.700} />
          <ellipse cx={15} cy={24} rx={8} ry={4} fill="#4cc3e8" opacity={0.700} />
          <path d="M9 9c2-1 4-1 5 0l-1 5c-2-1-4-1-6 0z" fill="#e8632b" />
          <path d="M15.500 9.500c2 1 4 1 6 0l-1 5c-2 1-4 1-6 0z" fill="#8bc23c" />
          <path d="M7 15.500c2-1 4-1 6 0l-1 5c-2-1-4-1-6 0z" fill="#4ea3e0" />
          <path d="M14 16c2 1 4 1 6 0l-1 5c-2 1-4 1-6 0z" fill="#f6c733" />
        </svg>
      </button>
      <div className="ml-1 flex gap-[3px]">
        {taskButtons.map((button) => (
          <button
            key={button.label}
            aria-label={button.label}
            className={clsx("flex h-[30px] w-[44px] items-center justify-center border", button.className)}
          >
            {button.art}
          </button>
        ))}
      </div>
      <div className="ml-auto flex h-full items-center">
        <div className="flex h-[30px] w-[46px] items-center justify-center rounded-tl-lg border-t border-l border-[#4c4c4c]">
          <Icon w={26} h={26}>
            <circle cx={12} cy={14} r={11} fill="#cf3f42" stroke="#8b2426" />
            <path d="M9 6v5H4M15 6v5h5M9 22v-5H4M15 22v-5h5" stroke="#fff" strokeWidth={2} />
            <circle cx={19} cy={6} r={5} fill="#e8703a" stroke="none" />
            <path d="M17 4l4 4M21 4l-4 4" stroke="#fff" strokeWidth={2} />
          </Icon>
        </div>
        <div className="flex h-[30px] items-center rounded-tl-lg border-t border-l border-[#4c4c4c] pl-2">
          <span className="flex h-[17px] w-[36px] items-center justify-center border border-[#e4e4e4] bg-linear-to-r from-[#178a3d] to-[#0b5c27]">
            (1:47)
          </span>
          <span className="h-[9px] w-[2px] bg-[#ddd]" />
          <button aria-label="Show hidden icons" className="ml-4 flex w-3">
            <Icon w={7} h={4}>
              <path d="M0 4h7L3.500 0z" fill="#eee" stroke="none" />
            </Icon>
          </button>
          <div className="ml-2 flex items-center">
            <span className="flex w-5">
              <Icon w={12} h={12}>
                <path d="M1 1v11" stroke="#eee" />
                <path d="M1 1h5l1 2h4v5H6L5 7H1z" fill="#eee" stroke="none" />
              </Icon>
            </span>
            <span className="flex w-5">
              <Icon w={13} h={13}>
                <path d="M3 0l3 2 4-2 3 3-2 2 2 2-3 2v2l-3 2-4-2V8L0 6l3-2-2-2z" fill="#5eb3ea" stroke="none" />
                <circle cx={10} cy={10} r={3} fill="#37a84a" stroke="none" />
              </Icon>
            </span>
            <span className="flex w-5 pl-[2px]">
              <Icon w={8} h={13}>
                <path d="M1 2h2V1h2v1h2v10H1z" fill="#222" stroke="#fff" />
                <path d="M3 5h2v5H3z" fill="#fff" stroke="#fff" />
              </Icon>
            </span>
            <span className="flex w-5">
              <Icon w={13} h={13}>
                <path d="M4 3h8v6H4zM6 11h5M2 1v7h2M1 1h3" stroke="#eee" />
              </Icon>
            </span>
            <Icon w={13} h={12}>
              <path d="M1 4h2l3-3v10L3 8H1z" fill="#eee" stroke="none" />
              <path d="M8 4v4M10 2c1 3 1 5 0 8" stroke="#eee" />
            </Icon>
          </div>
          <div className="ml-2 w-[54px] text-center leading-[14px]">
            <div>12:17 PM</div>
            <div>7/2/2014</div>
          </div>
          <button aria-label="Show desktop" className="ml-[3px] h-[30px] w-[9px] border border-[#555] bg-[#2b2b2b]" />
        </div>
      </div>
    </footer>
  );
}

export default function App() {
  return (
    <div className="flex h-screen flex-col overflow-hidden bg-[#dfe1e4] font-['Open_Sans','Noto_Sans',sans-serif] text-[10px] leading-[14px] text-[#303338]">
      <Header />
      <Ribbon />
      <div className="h-[22px] shrink-0 bg-[#dee1e4]" />
      <Workspace />
      <StatusBar />
      <Taskbar />
    </div>
  );
}
